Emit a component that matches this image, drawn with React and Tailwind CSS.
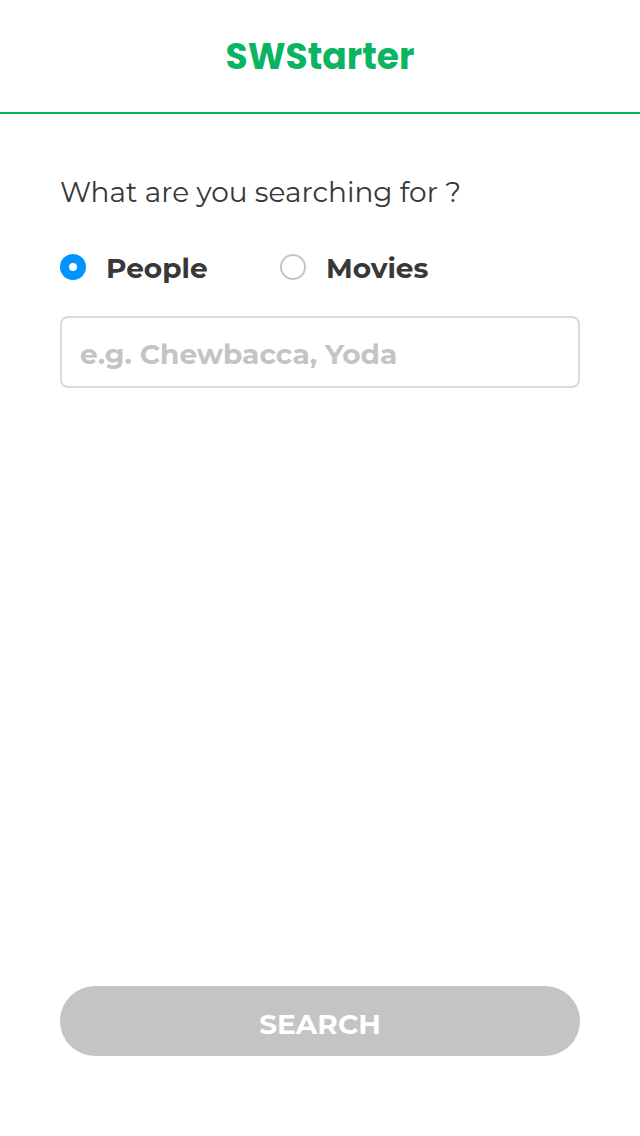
export default function App() {
  return (
    <div className="w-[640px] h-[1136px] bg-white flex flex-col" style={{ fontFamily: "Montserrat, Inter, 'Open Sans', sans-serif" }}>
      <header className="h-[114px] border-b-2 border-[#0ab463] flex items-center justify-center shrink-0">
        <span className="text-[36px] font-bold text-[#0ab463] leading-[40px] pt-[2px]" style={{ fontFamily: "Poppins, Inter, sans-serif" }}>SWStarter</span>
      </header>
      <main className="flex-1 flex flex-col px-[60px] pt-[60px] pb-[80px]">
        <p className="text-[28px] text-[#383838] leading-[36px]">What are you searching for ?</p>
        <div className="flex items-center mt-[40px] h-[34px]">
          <label className="flex items-center w-[220px]">
            <span className="w-[26px] h-[26px] rounded-full bg-[#0094ff] flex items-center justify-center">
              <span className="w-[8px] h-[8px] rounded-full bg-white"></span>
            </span>
            <span className="ml-[20px] text-[28px] font-bold text-[#383838] pt-[2px]">People</span>
          </label>
          <label className="flex items-center">
            <span className="w-[26px] h-[26px] rounded-full border-2 border-[#c4c4c4] bg-white"></span>
            <span className="ml-[20px] text-[28px] font-bold text-[#383838] pt-[2px]">Movies</span>
          </label>
        </div>
        <div className="mt-[32px] h-[72px] border-2 border-[#dadada] rounded-[8px] flex items-center px-[18px]">
          <span className="text-[28px] font-bold text-[#c4c4c4] pt-[3px]">e.g. Chewbacca, Yoda</span>
        </div>
        <div className="flex-1"></div>
        <button className="h-[70px] w-full rounded-full bg-[#c4c4c4] text-white text-[28px] font-bold flex items-center justify-center pt-[6px]">SEARCH</button>
      </main>
    </div>
  );
}
